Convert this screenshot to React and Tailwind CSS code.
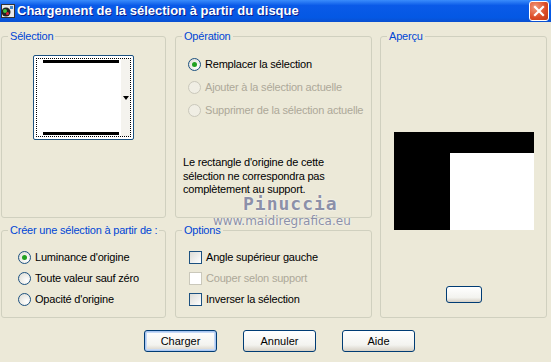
import React from 'react';

const font = { fontFamily: '"Liberation Sans", Arial, sans-serif' };

function Group({ label, className = '', children }) {
  return (
    <fieldset className={`border border-[#D0D0BF] rounded-[3px] px-0 pb-0 m-0 min-w-0 ${className}`}>
      <legend className="ml-[6px] px-[2px] text-[11px] leading-[13px] tracking-[-0.2px] whitespace-nowrap text-[#0046D5]">{label}</legend>
      {children}
    </fieldset>
  );
}

function Radio({ checked, disabled, label }) {
  return (
    <div className="flex items-center h-[21px]">
      <span
        className={`w-[13px] h-[13px] rounded-full border flex items-center justify-center shrink-0 ${
          disabled
            ? 'border-[#CAC8BB] bg-[#F0EEE4]'
            : 'border-[#1C5180] bg-[radial-gradient(circle_at_70%_70%,#ffffff,#DCDBD3)]'
        }`}
      >
        {checked && <span className="w-[5px] h-[5px] rounded-full bg-[#21A121]" />}
      </span>
      <span className={`ml-[4px] text-[11px] tracking-[-0.2px] whitespace-nowrap ${disabled ? 'text-[#ACA899]' : 'text-black'}`}>{label}</span>
    </div>
  );
}

function Check({ disabled, label }) {
  return (
    <div className="flex items-center h-[21px]">
      <span
        className={`w-[13px] h-[13px] border shrink-0 ${
          disabled
            ? 'border-[#CAC8BB] bg-white'
            : 'border-[#1C5180] bg-[linear-gradient(135deg,#DCDCD7,#ffffff)]'
        }`}
      />
      <span className={`ml-[4px] text-[11px] tracking-[-0.2px] whitespace-nowrap ${disabled ? 'text-[#ACA899]' : 'text-black'}`}>{label}</span>
    </div>
  );
}

function Button({ children, isDefault, className = '' }) {
  return (
    <button
      className={`h-[22px] rounded-[3px] border border-[#003C74] bg-[linear-gradient(#FFFFFF,#F3F3EF_70%,#D6D0C5)] text-[11px] text-black ${
        isDefault ? 'shadow-[inset_0_0_0_1px_#A9C6F2,inset_0_0_0_2px_#C6D9F5]' : ''
      } ${className}`}
    >
      {children}
    </button>
  );
}

export default function App() {
  return (
    <div className="relative w-[551px] h-[362px] bg-[#ECE9D8] overflow-hidden" style={font}>
      {/* Title bar */}
      <div className="h-[22px] flex items-center bg-[linear-gradient(#3A8CFB,#0A5AE8_25%,#0458E4_80%,#0A4FD0)] pl-[1px] pr-[2px]">
        <svg width="14" height="14" viewBox="0 0 14 14" className="shrink-0">
          <rect x="0.5" y="0.5" width="13" height="13" fill="#e8e8e8" stroke="#333" />
          <circle cx="5" cy="8" r="4.5" fill="#222" />
          <circle cx="4" cy="7" r="2" fill="#3fbf3f" />
          <circle cx="6.5" cy="9.5" r="1.5" fill="#d23" />
          <rect x="9" y="2" width="3" height="3" fill="#48c" />
        </svg>
        <span className="ml-[2px] text-white font-bold text-[13px] [text-shadow:1px_1px_#0A1E8C]">
          Chargement de la sélection à partir du disque
        </span>
        <div className="ml-auto w-[20px] h-[20px] rounded-[3px] border border-white bg-[radial-gradient(circle_at_30%_30%,#F29A7E,#DB4A25_60%,#C03A18)] flex items-center justify-center">
          <svg width="12" height="12" viewBox="0 0 12 12">
            <path d="M2 2 L10 10 M10 2 L2 10" stroke="white" strokeWidth="2.2" strokeLinecap="square" />
          </svg>
        </div>
      </div>

      {/* Body */}
      <div className="pt-[8px] pl-[1px] grid grid-cols-[165px_198px_167px] gap-x-[8px]">
        <div className="flex flex-col gap-[6px]">
          <Group label="Sélection" className="h-[188px]">
            <div className="flex justify-center pt-[12px]">
              <div className="relative w-[101px] h-[85px] rounded-[2px] border border-[#1C5180] bg-white p-[2px]">
                <div className="w-full h-full border border-dotted border-black flex flex-col justify-between py-[1px] pl-[6px] pr-[11px]">
                  <div className="h-[3px] bg-black" />
                  <div className="h-[3px] bg-black" />
                </div>
                <div className="absolute right-[3px] top-[3px] bottom-[3px] w-[9px] bg-[#F4F3EE]" />
                <svg className="absolute right-[4px] top-[40px]" width="6" height="4" viewBox="0 0 6 4">
                  <path d="M0 0 H6 L3 4 Z" fill="black" />
                </svg>
              </div>
            </div>
          </Group>
          <Group label="Créer une sélection à partir de :" className="h-[94px]">
            <div className="pl-[16px] pt-[10px] flex flex-col">
              <Radio checked label="Luminance d'origine" />
              <Radio label="Toute valeur sauf zéro" />
              <Radio label="Opacité d'origine" />
            </div>
          </Group>
        </div>

        <div className="flex flex-col gap-[6px] pl-[1px]">
          <Group label="Opération" className="h-[188px]">
            <div className="pl-[12px] pt-[11px] flex flex-col gap-[2px]">
              <Radio checked label="Remplacer la sélection" />
              <Radio disabled label="Ajouter à la sélection actuelle" />
              <Radio disabled label="Supprimer de la sélection actuelle" />
            </div>
            <p className="pl-[7px] pt-[35px] text-[11px] leading-[13.5px] tracking-[-0.2px] text-black">
              Le rectangle d'origine de cette
              <br />
              sélection ne correspondra pas
              <br />
              complètement au support.
            </p>
          </Group>
          <Group label="Options" className="h-[94px]">
            <div className="pl-[13px] pt-[10px] flex flex-col">
              <Check label="Angle supérieur gauche" />
              <Check disabled label="Couper selon support" />
              <Check label="Inverser la sélection" />
            </div>
          </Group>
        </div>

        <Group label="Aperçu" className="h-[288px]">
          <div className="flex flex-col items-center pt-[89px]">
            <div className="w-[140px] h-[98px] bg-black flex flex-col items-end pt-[21px]">
              <div className="w-[84px] flex-1 bg-white" />
            </div>
            <button className="mt-[56px] w-[36px] h-[17px] rounded-[3px] border border-[#003C74] bg-[linear-gradient(#FFFFFF,#F3F3EF_70%,#D6D0C5)]" />
          </div>
        </Group>
      </div>

      {/* Buttons */}
      <div className="flex gap-[26px] pl-[144px] pt-[12px]">
        <Button isDefault className="w-[73px]">Charger</Button>
        <Button className="w-[73px]">Annuler</Button>
        <Button className="w-[73px]">Aide</Button>
      </div>

      {/* Watermark */}
      <div className="absolute left-[243px] top-[194px] text-[18px] leading-[20px] font-bold tracking-[1px] text-[#8C90A8] [text-shadow:0_0_2px_#fff]" style={{ fontFamily: '"DejaVu Sans Mono", monospace' }}>
        Pinuccia
      </div>
      <div className="absolute left-[213px] top-[214px] text-[12px] leading-[14px] text-[#8C90A8] [text-shadow:0_0_2px_#fff]" style={{ fontFamily: '"DejaVu Sans", sans-serif' }}>
        www.maidiregrafica.eu
      </div>
    </div>
  );
}
